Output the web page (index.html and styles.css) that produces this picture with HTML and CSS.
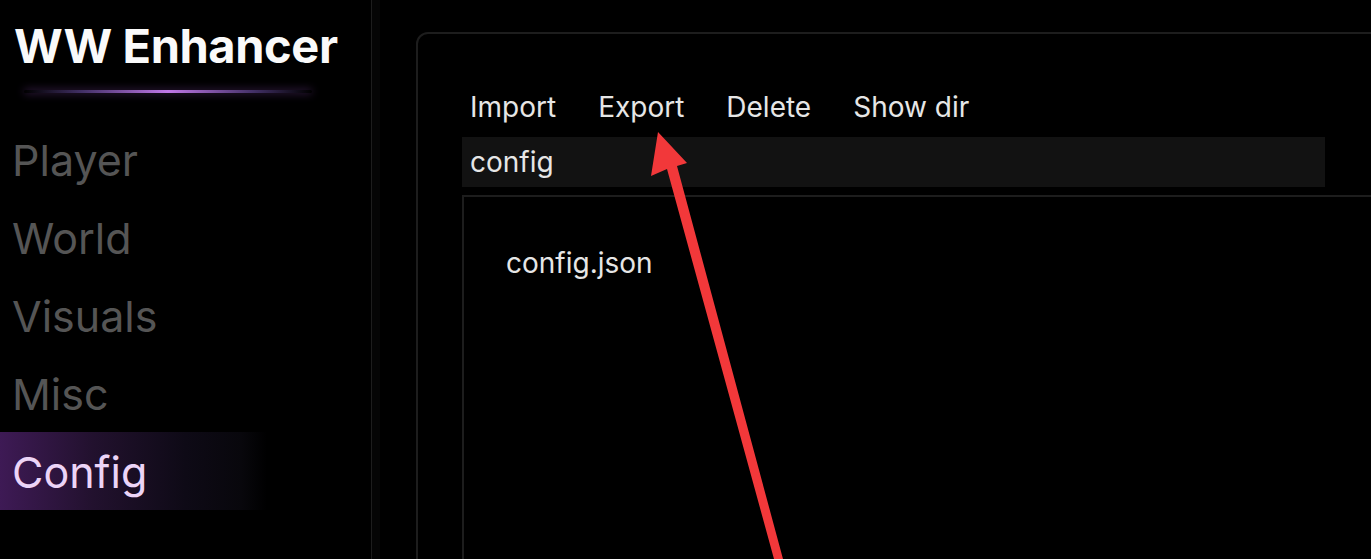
FILE: index.html
```html
<!DOCTYPE html>
<html lang="en">
<head>
    <meta charset="UTF-8">
    <meta name="viewport" content="width=device-width, initial-scale=1.0">
    <title>WW Enhancer</title>
    <link rel="stylesheet" href="styles.css">
</head>
<body>
    <aside class="sidebar">
        <h1 class="brand">WW Enhancer</h1>
        <div class="brand-glow"></div>
        <nav class="nav">
            <a class="nav-item">Player</a>
            <a class="nav-item">World</a>
            <a class="nav-item">Visuals</a>
            <a class="nav-item">Misc</a>
            <a class="nav-item active">Config</a>
        </nav>
    </aside>

    <main class="main">
        <section class="card">
            <div class="toolbar">
                <button class="tool-btn">Import</button>
                <button class="tool-btn">Export</button>
                <button class="tool-btn">Delete</button>
                <button class="tool-btn">Show dir</button>
            </div>
            <input class="name-input" type="text" value="config">
            <div class="file-list">
                <div class="file-item">config.json</div>
            </div>
        </section>
    </main>

    <!-- pointer drawn over the page -->
    <svg class="pointer" width="1371" height="559" viewBox="0 0 1371 559">
        <path d="M658 132 L687 163 L677 166 L783 559 L774 559 L667 169 L651 176 Z" fill="#f2383a"/>
    </svg>
</body>
</html>
```

FILE: styles.css
```css
:root {
    --text: #e6e6e6;
    --muted: #555;
    --line: #1d1d1d;
}

body {
    margin: 0;
    height: 559px;
    overflow: hidden;
    display: flex;
    background: #000;
    color: var(--text);
    font-family: 'Inter', 'Liberation Sans', sans-serif;
}

.sidebar {
    width: 371px;
    flex-shrink: 0;
    border-right: 1px solid var(--line);
    box-shadow: 8px 0 0 #050505;
}

.brand {
    margin: 0;
    padding: 18px 0 0 14px;
    font-size: 47px;
    font-weight: 700;
    letter-spacing: -0.4px;
    color: #fafafa;
    line-height: 56px;
}

.brand-glow {
    margin: 16px 0 0 24px;
    width: 288px;
    height: 3px;
    border-radius: 2px;
    background: linear-gradient(90deg, rgba(120, 90, 160, 0) 0%, rgba(110, 80, 170, 0.6) 20%, #c078e8 50%, rgba(110, 80, 170, 0.6) 80%, rgba(120, 90, 160, 0) 100%);
    box-shadow: 0 0 8px rgba(170, 90, 220, 0.5);
}

.nav {
    display: flex;
    flex-direction: column;
    margin-top: 27px;
}

.nav-item {
    display: block;
    padding: 0 12px;
    height: 78px;
    line-height: 80px;
    font-size: 43px;
    color: var(--muted);
    cursor: pointer;
}

.nav-item.active {
    color: #ecd4f7;
    background: linear-gradient(90deg, #3e1a55 0%, #22112e 25%, #0e0a16 50%, #08070c 65%, rgba(0, 0, 0, 0) 72%);
}

.main {
    flex: 1;
    padding: 32px 0 0 44px;
    overflow: hidden;
}

.card {
    width: 1200px;
    height: 800px;
    box-sizing: border-box;
    border: 2px solid var(--line);
    border-radius: 12px;
    padding: 55px 0 0 44px;
}

.toolbar {
    display: flex;
    gap: 26px;
}

.tool-btn {
    background: none;
    border: none;
    padding: 0 8px;
    color: var(--text);
    font-family: inherit;
    font-size: 28px;
    line-height: 36px;
    cursor: pointer;
}

.name-input {
    display: block;
    margin-top: 12px;
    width: 863px;
    height: 50px;
    box-sizing: border-box;
    padding: 0 8px;
    border: none;
    outline: none;
    background: #121212;
    color: var(--text);
    font-family: inherit;
    font-size: 28px;
}

.file-list {
    margin-top: 8px;
    height: 600px;
    border-top: 2px solid var(--line);
    border-left: 2px solid var(--line);
    padding: 48px 0 0 42px;
}

.file-item {
    font-size: 28px;
    line-height: 36px;
}

.pointer {
    position: absolute;
    left: 0;
    top: 0;
    pointer-events: none;
}
```
